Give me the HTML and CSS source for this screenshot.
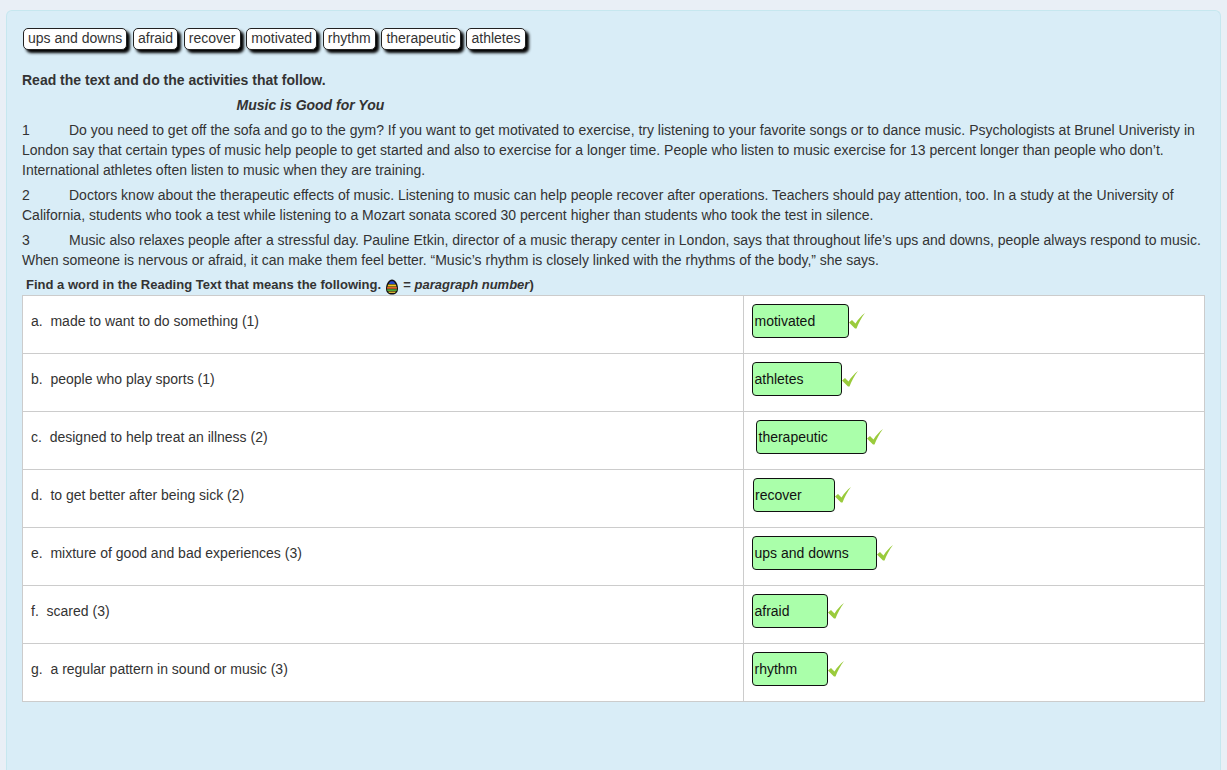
FILE: index.html
```html
<!DOCTYPE html>
<html lang="en">
<head>
<meta charset="utf-8">
<title>Music is Good for You</title>
<link rel="stylesheet" href="styles.css">
</head>
<body>
<main class="panel">
  <div class="tags">
    <span class="tag">ups and downs</span>
    <span class="tag">afraid</span>
    <span class="tag">recover</span>
    <span class="tag">motivated</span>
    <span class="tag">rhythm</span>
    <span class="tag">therapeutic</span>
    <span class="tag">athletes</span>
  </div>
  <p class="lead"><strong>Read the text and do the activities that follow.</strong></p>
  <p class="title"><strong><em>Music is Good for You</em></strong></p>
  <p class="para"><span class="num">1</span>Do you need to get off the sofa and go to the gym? If you want to get motivated to exercise, try listening to your favorite songs or to dance music. Psychologists at Brunel Univeristy in London say that certain types of music help people to get started and also to exercise for a longer time. People who listen to music exercise for 13 percent longer than people who don’t. International athletes often listen to music when they are training.</p>
  <p class="para"><span class="num">2</span>Doctors know about the therapeutic effects of music. Listening to music can help people recover after operations. Teachers should pay attention, too. In a study at the University of California, students who took a test while listening to a Mozart sonata scored 30 percent higher than students who took the test in silence.</p>
  <p class="para"><span class="num">3</span>Music also relaxes people after a stressful day. Pauline Etkin, director of a music therapy center in London, says that throughout life’s ups and downs, people always respond to music. When someone is nervous or afraid, it can make them feel better. “Music’s rhythm is closely linked with the rhythms of the body,” she says.</p>
  <p class="instr"><strong>Find a word in the Reading Text that means the following.
    <svg class="egg" viewBox="0 0 14 16" width="14" height="16" aria-hidden="true">
      <path d="M7 0.5C10 0.5 13 4.500 13 9.500C13 13.500 10.500 15.500 7 15.500C3.500 15.500 1 13.500 1 9.500C1 4.500 4 0.500 7 0.500Z" fill="#111"/>
      <path d="M4.500 3.500C5.300 1.800 8.700 1.800 9.500 3.500L10.300 5H3.700Z" fill="#2a48c8"/>
      <path d="M3.300 5.500H10.700L11.600 7.500H2.400Z" fill="#f0c820"/>
      <path d="M2.200 8H11.800L12 9.800H2Z" fill="#e0642a"/>
      <path d="M2 10.200H12L11.600 12H2.400Z" fill="#4fa838"/>
      <path d="M3 12.500H11L9.800 14H4.200Z" fill="#d8b030"/>
    </svg>
    = <em>paragraph number</em>)</strong></p>
  <table class="quiz">
    <tr>
      <td class="q"><div class="cell">a.&nbsp; made to want to do something (1)</div></td>
      <td class="a"><div class="cell"><span class="answer w-motivated">motivated</span><svg class="tick" viewBox="0 0 16 16" width="16" height="16" aria-hidden="true"><path d="M0 9.500L3 7L6.500 10.500C9 6.500 12 3 16 0C12.500 4.500 9.500 10 7.500 15.500H6Z"/></svg></div></td>
    </tr>
    <tr>
      <td class="q"><div class="cell">b.&nbsp; people who play sports (1)</div></td>
      <td class="a"><div class="cell"><span class="answer w-athletes">athletes</span><svg class="tick" viewBox="0 0 16 16" width="16" height="16" aria-hidden="true"><path d="M0 9.500L3 7L6.500 10.500C9 6.500 12 3 16 0C12.500 4.500 9.500 10 7.500 15.500H6Z"/></svg></div></td>
    </tr>
    <tr>
      <td class="q"><div class="cell">c.&nbsp; designed to help treat an illness (2)</div></td>
      <td class="a"><div class="cell"><span class="answer w-therapeutic">therapeutic</span><svg class="tick" viewBox="0 0 16 16" width="16" height="16" aria-hidden="true"><path d="M0 9.500L3 7L6.500 10.500C9 6.500 12 3 16 0C12.500 4.500 9.500 10 7.500 15.500H6Z"/></svg></div></td>
    </tr>
    <tr>
      <td class="q"><div class="cell">d.&nbsp; to get better after being sick (2)</div></td>
      <td class="a"><div class="cell"><span class="answer w-recover">recover</span><svg class="tick" viewBox="0 0 16 16" width="16" height="16" aria-hidden="true"><path d="M0 9.500L3 7L6.500 10.500C9 6.500 12 3 16 0C12.500 4.500 9.500 10 7.500 15.500H6Z"/></svg></div></td>
    </tr>
    <tr>
      <td class="q"><div class="cell">e.&nbsp; mixture of good and bad experiences (3)</div></td>
      <td class="a"><div class="cell"><span class="answer w-ups">ups and downs</span><svg class="tick" viewBox="0 0 16 16" width="16" height="16" aria-hidden="true"><path d="M0 9.500L3 7L6.500 10.500C9 6.500 12 3 16 0C12.500 4.500 9.500 10 7.500 15.500H6Z"/></svg></div></td>
    </tr>
    <tr>
      <td class="q"><div class="cell">f.&nbsp; scared (3)</div></td>
      <td class="a"><div class="cell"><span class="answer w-afraid">afraid</span><svg class="tick" viewBox="0 0 16 16" width="16" height="16" aria-hidden="true"><path d="M0 9.500L3 7L6.500 10.500C9 6.500 12 3 16 0C12.500 4.500 9.500 10 7.500 15.500H6Z"/></svg></div></td>
    </tr>
    <tr>
      <td class="q"><div class="cell">g.&nbsp; a regular pattern in sound or music (3)</div></td>
      <td class="a"><div class="cell"><span class="answer w-rhythm">rhythm</span><svg class="tick" viewBox="0 0 16 16" width="16" height="16" aria-hidden="true"><path d="M0 9.500L3 7L6.500 10.500C9 6.500 12 3 16 0C12.500 4.500 9.500 10 7.500 15.500H6Z"/></svg></div></td>
    </tr>
  </table>
</main>
</body>
</html>
```
FILE: styles.css
```css
* { box-sizing: border-box; }
html, body { height: 770px; overflow: hidden; }
body {
  margin: 0;
  background: #e9eff6;
  font-family: "Liberation Sans", Arial, sans-serif;
  font-size: 14px;
  line-height: 20px;
  color: #333;
  padding: 10px 6px 0;
}
.panel {
  width: 1215px;
  height: 760px;
  background: #d9edf7;
  border: 1px solid #c6e7ef;
  border-bottom: 0;
  border-radius: 6px 6px 0 0;
  padding: 17px 15px 0;
}
.tags {
  display: flex;
  gap: 5.8px;
  margin-left: 1px;
  height: 22px;
  margin-bottom: 20px;
}
.tag {
  background: #fff;
  border: 1px solid #222;
  border-radius: 5px;
  padding: 0 4px;
  height: 22px;
  line-height: 18px;
  box-shadow: 3px 3px 3px #000;
}
p { margin: 0 0 5px; }
.title { padding-left: 214.5px; }
.num { display: inline-block; width: 47px; }
.instr {
  margin: 0;
  padding-left: 4px;
  height: 20px;
  line-height: 20px;
  font-size: 13px;
  white-space: nowrap;
}
.egg { vertical-align: -6px; margin-right: 1px; }
.quiz {
  width: 1183px;
  border-collapse: collapse;
  background: #fff;
  table-layout: fixed;
}
.quiz td {
  border: 1px solid #ccc;
  padding: 8px 8px 15px;
}
.quiz .q { width: 721px; }
.cell { display: flex; align-items: center; height: 34px; }
.answer {
  display: block;
  height: 34px;
  line-height: 32px;
  background: #aaffaa;
  border: 1px solid #111;
  border-radius: 4px;
  padding-left: 1.5px;
  color: #111;
}
.w-motivated { width: 97px; }
.w-athletes { width: 90px; }
.w-therapeutic { width: 111px; margin-left: 4px; }
.w-recover { width: 82px; margin-left: 1px; padding-left: 1px; }
.w-ups { width: 125px; }
.w-afraid { width: 76px; }
.w-rhythm { width: 76px; }
.tick { fill: #9acb3c; flex: none; }
```
